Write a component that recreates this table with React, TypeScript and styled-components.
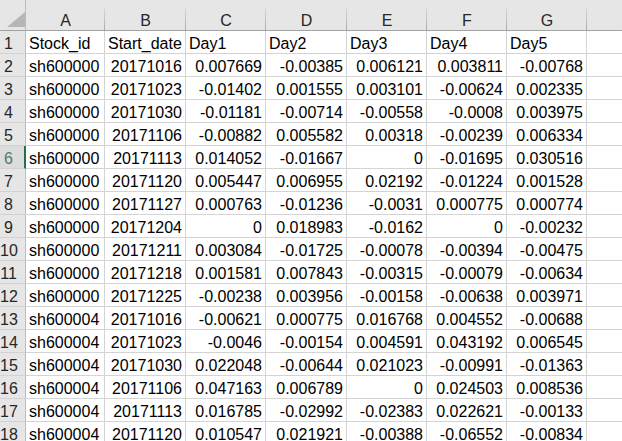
import React from "react";
import styled, { createGlobalStyle } from "styled-components";

const Global = createGlobalStyle`
  html, body { margin: 0; padding: 0; background: #ffffff; }
  body { font-family: "Liberation Sans", Arial, sans-serif; }
`;

const COLS = [79, 81, 80, 81, 80, 80, 80, 80];
const LETTERS = ["A", "B", "C", "D", "E", "F", "G", "H"];

const Sheet = styled.div`
  display: grid;
  grid-template-columns: 26px ${COLS.map((c) => `${c}px`).join(" ")};
  grid-template-rows: 31px;
  grid-auto-rows: 23px;
  width: 622px;
  height: 441px;
  overflow: hidden;
  font-family: "Liberation Sans", Arial, sans-serif;
  font-size: 16px;
  color: #000;
`;

const Corner = styled.div`
  box-sizing: border-box;
  background: #e6e6e6;
  border-right: 1px solid #bcbcbc;
  border-bottom: 1px solid #a3a3a3;
  display: flex;
  justify-content: flex-end;
  align-items: flex-end;
  padding: 0 0 3px 0;
`;

const ColHead = styled.div`
  box-sizing: border-box;
  background:
    linear-gradient(to bottom, #d8d8d8, #a9a9a9) right bottom / 1px 22px no-repeat,
    #e6e6e6;
  border-bottom: 1px solid #a3a3a3;
  text-align: center;
  line-height: 20px;
  padding-top: 11px;
  color: #262626;
  white-space: nowrap;
  overflow: hidden;
`;

const RowHead = styled.div<{ $active?: boolean }>`
  box-sizing: border-box;
  background: ${(p) => (p.$active ? "#dcdcdc" : "#e6e6e6")};
  border-right: ${(p) => (p.$active ? "2px solid #217346" : "1px solid #bcbcbc")};
  border-bottom: 1px solid #d2d2d2;
  color: ${(p) => (p.$active ? "#4f7d63" : "#262626")};
  line-height: 20px;
  padding-top: 3px;
  padding-right: ${(p) => (p.$active ? "7px" : "8px")};
  text-align: center;
  white-space: nowrap;
`;

const Cell = styled.div<{ $num?: boolean }>`
  box-sizing: border-box;
  border-right: 1px solid #d4d4d4;
  border-bottom: 1px solid #d4d4d4;
  line-height: 20px;
  padding: 3px 3px 0 3px;
  text-align: ${(p) => (p.$num ? "right" : "left")};
  white-space: nowrap;
  overflow: ${(p) => (p.$num ? "hidden" : "visible")};
`;

const Triangle = () => (
  <svg width="18" height="15" viewBox="0 0 18 15">
    <polygon points="18,0 18,15 0,15" fill="#b6b6b6" />
  </svg>
);

const header = ["Stock_id", "Start_date", "Day1", "Day2", "Day3", "Day4", "Day5"];

const data: string[][] = [
  ["sh600000", "20171016", "0.007669", "-0.00385", "0.006121", "0.003811", "-0.00768"],
  ["sh600000", "20171023", "-0.01402", "0.001555", "0.003101", "-0.00624", "0.002335"],
  ["sh600000", "20171030", "-0.01181", "-0.00714", "-0.00558", "-0.0008", "0.003975"],
  ["sh600000", "20171106", "-0.00882", "0.005582", "0.00318", "-0.00239", "0.006334"],
  ["sh600000", "20171113", "0.014052", "-0.01667", "0", "-0.01695", "0.030516"],
  ["sh600000", "20171120", "0.005447", "0.006955", "0.02192", "-0.01224", "0.001528"],
  ["sh600000", "20171127", "0.000763", "-0.01236", "-0.0031", "0.000775", "0.000774"],
  ["sh600000", "20171204", "0", "0.018983", "-0.0162", "0", "-0.00232"],
  ["sh600000", "20171211", "0.003084", "-0.01725", "-0.00078", "-0.00394", "-0.00475"],
  ["sh600000", "20171218", "0.001581", "0.007843", "-0.00315", "-0.00079", "-0.00634"],
  ["sh600000", "20171225", "-0.00238", "0.003956", "-0.00158", "-0.00638", "0.003971"],
  ["sh600004", "20171016", "-0.00621", "0.000775", "0.016768", "0.004552", "-0.00688"],
  ["sh600004", "20171023", "-0.0046", "-0.00154", "0.004591", "0.043192", "0.006545"],
  ["sh600004", "20171030", "0.022048", "-0.00644", "0.021023", "-0.00991", "-0.01363"],
  ["sh600004", "20171106", "0.047163", "0.006789", "0", "0.024503", "0.008536"],
  ["sh600004", "20171113", "0.016785", "-0.02992", "-0.02383", "0.022621", "-0.00133"],
  ["sh600004", "20171120", "0.010547", "0.021921", "-0.00388", "-0.06552", "-0.00834"],
];

export default function App() {
  return (
    <>
      <Global />
      <Sheet>
        <Corner>
          <Triangle />
        </Corner>
        {LETTERS.map((l) => (
          <ColHead key={l}>{l}</ColHead>
        ))}

        <RowHead>1</RowHead>
        {header.map((h) => (
          <Cell key={h}>{h}</Cell>
        ))}
        <Cell />

        {data.map((row, i) => (
          <React.Fragment key={i}>
            <RowHead $active={i + 2 === 6}>{i + 2}</RowHead>
            {row.map((v, j) => (
              <Cell key={j} $num={j > 0}>
                {v}
              </Cell>
            ))}
            <Cell />
          </React.Fragment>
        ))}
      </Sheet>
    </>
  );
}
